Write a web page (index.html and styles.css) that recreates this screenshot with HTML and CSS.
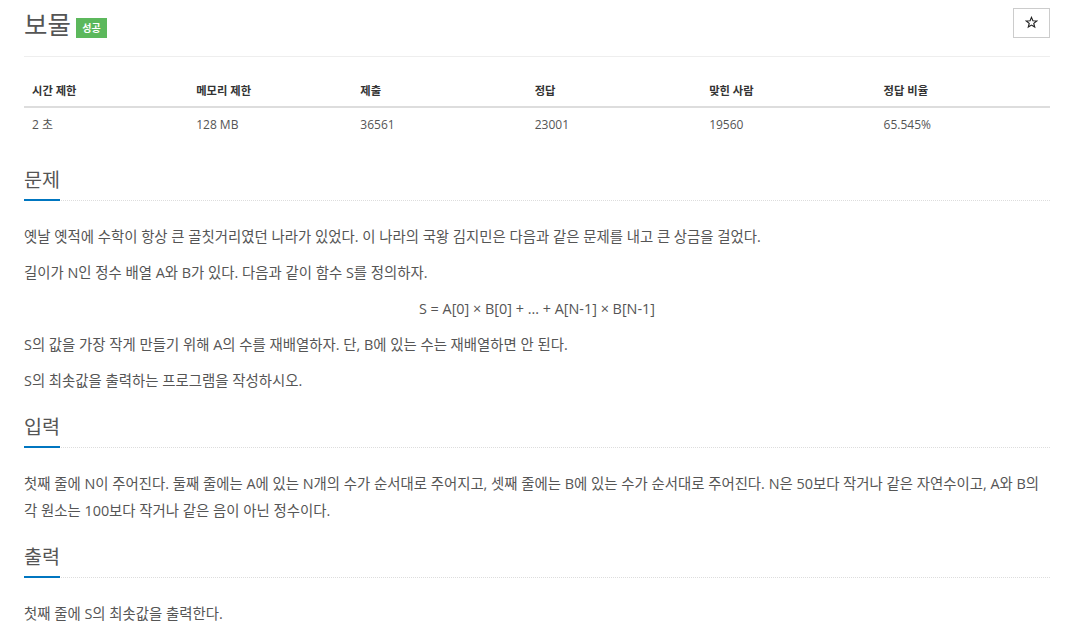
FILE: index.html
```html
<!DOCTYPE html>
<html lang="ko">
<head>
<meta charset="utf-8">
<title>보물</title>
<link rel="stylesheet" href="styles.css">
</head>
<body>
<div class="page">
  <div class="title-row">
    <h1 class="title">보물<span class="badge">성공</span></h1>
    <button class="star-btn" type="button" aria-label="즐겨찾기">
      <svg class="star-icon" viewBox="0 0 24 24" width="13" height="13" aria-hidden="true">
        <path d="M12 2.5l2.6 6.3 6.9.5-5.3 4.4 1.7 6.7L12 16.8l-5.9 3.6 1.7-6.7-5.3-4.4 6.9-.5z" fill="none" stroke="#222" stroke-width="2.1" stroke-linejoin="miter"/>
      </svg>
    </button>
  </div>

  <table class="info">
    <thead>
      <tr>
        <th class="w16">시간 제한</th>
        <th class="w16">메모리 제한</th>
        <th class="w17">제출</th>
        <th class="w17">정답</th>
        <th class="w17">맞힌 사람</th>
        <th class="w17">정답 비율</th>
      </tr>
    </thead>
    <tbody>
      <tr>
        <td>2 초</td>
        <td>128 MB</td>
        <td>36561</td>
        <td>23001</td>
        <td>19560</td>
        <td>65.545%</td>
      </tr>
    </tbody>
  </table>

  <section class="section">
    <div class="headline"><h2>문제</h2></div>
    <p>옛날 옛적에 수학이 항상 큰 골칫거리였던 나라가 있었다. 이 나라의 국왕 김지민은 다음과 같은 문제를 내고 큰 상금을 걸었다.</p>
    <p>길이가 N인 정수 배열 A와 B가 있다. 다음과 같이 함수 S를 정의하자.</p>
    <p class="center">S = A[0] × B[0] + ... + A[N-1] × B[N-1]</p>
    <p>S의 값을 가장 작게 만들기 위해 A의 수를 재배열하자. 단, B에 있는 수는 재배열하면 안 된다.</p>
    <p>S의 최솟값을 출력하는 프로그램을 작성하시오.</p>
  </section>

  <section class="section">
    <div class="headline"><h2>입력</h2></div>
    <p>첫째 줄에 N이 주어진다. 둘째 줄에는 A에 있는 N개의 수가 순서대로 주어지고, 셋째 줄에는 B에 있는 수가 순서대로 주어진다. N은 50보다 작거나 같은 자연수이고, A와 B의 각 원소는 100보다 작거나 같은 음이 아닌 정수이다.</p>
  </section>

  <section class="section">
    <div class="headline"><h2>출력</h2></div>
    <p>첫째 줄에 S의 최솟값을 출력한다.</p>
  </section>
</div>
</body>
</html>
```

FILE: styles.css
```css
html, body {
  margin: 0;
  padding: 0;
  background: #fff;
}

body {
  font-family: "Open Sans", "Noto Sans CJK KR", sans-serif;
  color: #555;
}

.page {
  padding: 0 36px 0 24px;
}

.title-row {
  display: flex;
  justify-content: space-between;
  align-items: flex-start;
  padding-top: 8px;
  height: 48px;
  border-bottom: 1px solid #eee;
}

.title {
  margin: 0;
  font-size: 25.5px;
  line-height: 32px;
  font-weight: 400;
  color: #555;
  display: flex;
  align-items: flex-start;
}

.badge {
  margin-left: 5px;
  margin-top: 10px;
  height: 20px;
  width: 31px;
  display: inline-flex;
  align-items: center;
  justify-content: center;
  background: #5cb85c;
  color: #fff;
  font-size: 10px;
  font-weight: 700;
  line-height: 1;
}

.star-btn {
  width: 37px;
  height: 30px;
  margin: 0;
  padding: 0;
  border: 1px solid #ccc;
  background: #fff;
  display: flex;
  align-items: center;
  justify-content: center;
}

.star-icon {
  display: block;
  margin-top: -1px;
}

.info {
  width: 100%;
  border-collapse: collapse;
  margin-top: 18px;
  margin-bottom: 0;
}

.w16 { width: 16%; }
.w17 { width: 17%; }

.info th {
  text-align: left;
  font-size: 11.3px;
  line-height: 15px;
  font-weight: 700;
  color: #333;
  padding: 8px;
  border-bottom: 2px solid #ddd;
}

.info td {
  font-size: 12px;
  line-height: 17px;
  padding: 8px;
  color: #555;
}

.section {
  margin-top: 26px;
}

.section + .section {
  margin-top: 20px;
}

.headline {
  border-bottom: 1px dotted #ddd;
  margin-bottom: 22px;
}

.headline h2 {
  display: inline-block;
  margin: 0 0 -1px;
  font-size: 19.6px;
  line-height: 26px;
  font-weight: 400;
  color: #555;
  padding-bottom: 6px;
  border-bottom: 2px solid #0076c0;
}

.section p {
  margin: 0 0 9px;
  font-size: 14.4px;
  line-height: 27px;
}

.section p.center {
  text-align: center;
}
```
